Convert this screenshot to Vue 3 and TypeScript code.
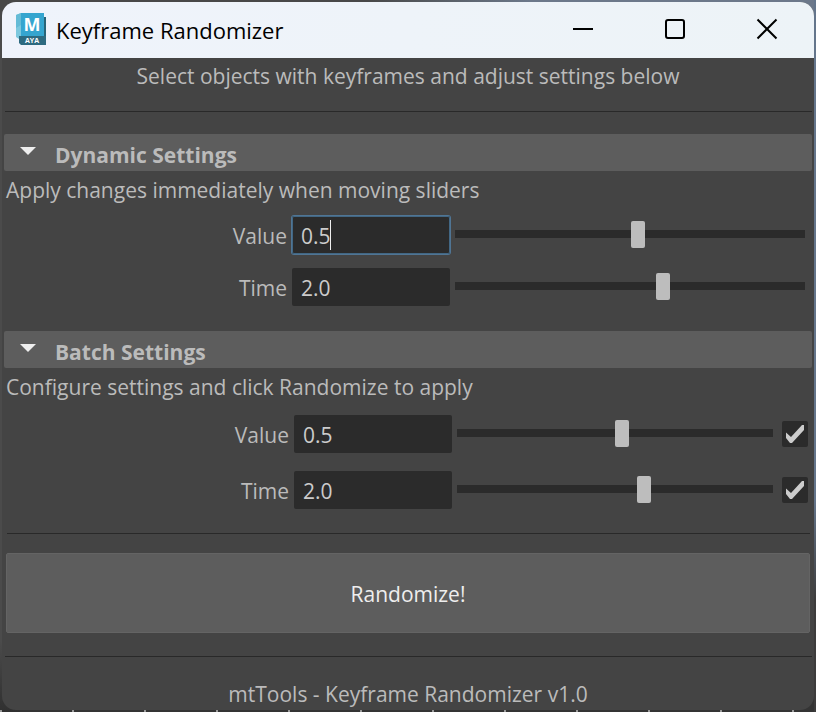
<script setup lang="ts">
import { reactive } from 'vue'

interface Setting {
  id: string
  label: string
  amount: string
  position: number
  focused?: boolean
  enabled?: boolean
}

interface Section {
  id: string
  title: string
  note: string
  open: boolean
  batch: boolean
  settings: Setting[]
}

const sections = reactive<Section[]>([
  {
    id: 'dynamic',
    title: 'Dynamic Settings',
    note: 'Apply changes immediately when moving sliders',
    open: true,
    batch: false,
    settings: [
      { id: 'dynamic-value', label: 'Value', amount: '0.5', position: 524, focused: true },
      { id: 'dynamic-time', label: 'Time', amount: '2.0', position: 598 },
    ],
  },
  {
    id: 'batch',
    title: 'Batch Settings',
    note: 'Configure settings and click Randomize to apply',
    open: true,
    batch: true,
    settings: [
      { id: 'batch-value', label: 'Value', amount: '0.5', position: 523, enabled: true },
      { id: 'batch-time', label: 'Time', amount: '2.0', position: 596, enabled: true },
    ],
  },
])
</script>

<template>
  <div class="desktop">
    <main class="window">
      <header class="titlebar">
        <svg class="logo" viewBox="0 0 30 32" aria-hidden="true">
          <path d="M0 2 5 0v23l-2 3-3-2z" fill="#7cc8de" />
          <path d="M0 2 5 0v12L0 15z" fill="#64bbd6" />
          <path d="M27 4h3v27l-3 1z" fill="#286478" />
          <path d="M5 0h23v23H5z" fill="#35a5cf" />
          <path d="M3 23h27v9H5l-2-2z" fill="#2d6a80" />
          <text class="logo-letter" x="16" y="18" text-anchor="middle">M</text>
          <text class="logo-name" x="16" y="30" text-anchor="middle">AYA</text>
        </svg>
        <h1 class="title">Keyframe Randomizer</h1>
        <div class="controls">
          <button type="button" class="control" aria-label="Minimize">
            <svg viewBox="0 0 22 22"><path d="M1 11h20" /></svg>
          </button>
          <button type="button" class="control" aria-label="Maximize">
            <svg viewBox="0 0 22 22"><rect x="2" y="2" width="18" height="18" rx="2" /></svg>
          </button>
          <button type="button" class="control" aria-label="Close">
            <svg viewBox="0 0 22 22"><path d="m1.500 1.500 19 19m0-19-19 19" /></svg>
          </button>
        </div>
      </header>

      <p class="caption intro">Select objects with keyframes and adjust settings below</p>
      <hr class="rule" />

      <section v-for="section in sections" :key="section.id" class="section" :class="{ batch: section.batch }">
        <h2 class="section-title">
          <button type="button" class="toggle" :aria-expanded="section.open" @click="section.open = !section.open">
            <svg class="arrow" :class="{ closed: !section.open }" viewBox="0 0 16 8" aria-hidden="true">
              <path d="M0 0h16L8 8z" />
            </svg>
            {{ section.title }}
          </button>
        </h2>
        <div v-if="section.open">
          <p class="note">{{ section.note }}</p>
          <div class="rows">
            <div v-for="item in section.settings" :key="item.id" class="row">
              <label class="label" :for="item.id">{{ item.label }}</label>
              <div class="field" :class="{ focused: item.focused }">
                <input :id="item.id" v-model="item.amount" class="amount" type="text" />
                <span v-if="item.focused" class="caret"></span>
              </div>
              <input
                v-model.number="item.position"
                class="slider"
                type="range"
                min="0"
                max="1000"
                :aria-label="item.label + ' slider'"
              />
              <label v-if="section.batch" class="tick">
                <input v-model="item.enabled" type="checkbox" :aria-label="item.label + ' enabled'" />
                <svg v-if="item.enabled" viewBox="0 0 26 26" aria-hidden="true">
                  <path d="M4 11.500 9 16 20 4h2v5L10 22H8l-4-5z" />
                </svg>
              </label>
            </div>
          </div>
        </div>
      </section>

      <hr class="rule inset" />
      <button type="button" class="randomize">Randomize!</button>
      <hr class="rule" />
      <footer class="caption">mtTools - Keyframe Randomizer v1.0</footer>
    </main>
  </div>
</template>

<style>
body {
  margin: 0;
  background: #444;
}
</style>

<style scoped>
* {
  box-sizing: border-box;
}

.desktop {
  min-height: 100vh;
  display: flex;
  padding: 2px;
  background:
    repeating-linear-gradient(90deg, #999 0 2px, transparent 2px 72px) bottom / 100% 2px no-repeat,
    linear-gradient(#64758b 0 500px, #3d3c3c 600px) right / 2px 100% no-repeat,
    linear-gradient(90deg, #484848 45%, #6c788a 65%) top / 100% 20px no-repeat,
    linear-gradient(#4b4b4b 90%, #303030) left / 20px 100% no-repeat,
    #343434;
  font-family: 'Open Sans', 'Noto Sans', sans-serif;
  font-size: 21px;
  line-height: 28px;
  color: #bbb;
}

.window {
  flex: 1;
  display: flex;
  flex-direction: column;
  min-width: 0;
  background: #444;
  border-radius: 14px;
  overflow: hidden;
}

.titlebar {
  display: flex;
  align-items: center;
  height: 56px;
  padding: 0 1px 0 14px;
  background: linear-gradient(90deg, #eff3fb, #edf3f7);
  color: #000;
}

.logo {
  width: 30px;
  height: 32px;
  margin-bottom: 2px;
}

.logo text {
  fill: #fff;
  font-weight: 700;
}

.logo-letter {
  font-size: 18px;
}

.logo-name {
  font-size: 7px;
}

.title {
  flex: 1;
  margin: 0 0 0 10px;
  font-size: 22px;
  font-weight: 400;
}

.controls {
  display: flex;
}

.control {
  width: 92px;
  height: 56px;
  padding: 0 0 2px;
  border: 0;
  background: none;
}

.control svg {
  display: block;
  width: 22px;
  height: 22px;
  margin: 0 auto;
  fill: none;
  stroke: #000;
  stroke-width: 2;
}

.caption {
  margin: 0;
  text-align: center;
}

.intro {
  padding: 4px 0 21px;
}

.rule {
  width: auto;
  height: 1px;
  margin: 0 2px 0 3px;
  border: 0;
  background: #292929;
}

.rule.inset {
  margin: 24px 4px 19px 5px;
}

.section {
  margin: 22px 2px 0;
}

.section.batch {
  margin-top: 25px;
}

.section-title {
  margin: 0;
  font-size: inherit;
}

.toggle {
  display: flex;
  align-items: center;
  width: 100%;
  height: 37px;
  padding: 4px 16px 0;
  border: 0;
  border-radius: 2px;
  background: #5d5d5d;
  color: #bbb;
  font: inherit;
  font-weight: 700;
}

.arrow {
  width: 16px;
  height: 8px;
  margin: 0 19px 8px 0;
  fill: #eee;
}

.arrow.closed {
  transform: rotate(-90deg);
}

.note {
  margin: 0;
  padding: 5px 2px 12px;
}

.batch .note {
  padding-bottom: 14px;
}

.rows {
  display: grid;
  gap: 14px;
  padding-right: 7px;
}

.batch .rows {
  gap: 18px;
  padding: 0 4px 0 2px;
}

.row {
  display: flex;
  align-items: center;
  height: 38px;
}

.label {
  width: 283px;
  padding-top: 2px;
  text-align: right;
}

.field {
  position: relative;
  width: 158px;
  height: 38px;
  margin: 0 5px;
}

.amount {
  display: block;
  width: 100%;
  height: 100%;
  padding: 2px 9px 0;
  border: 0;
  border-radius: 2px;
  outline: 0;
  background: #2b2b2b;
  color: #ccc;
  font: inherit;
}

.focused .amount {
  box-shadow: 0 0 0 1px #507594, inset 0 0 0 1px #426784;
}

.caret {
  position: absolute;
  top: 4px;
  left: 38px;
  width: 1px;
  height: 30px;
  background: #eee;
}

.slider {
  flex: 1;
  min-width: 0;
  height: 27px;
  margin: 0 0 2px;
  appearance: none;
  background: linear-gradient(#2b2b2b, #2b2b2b) center / 100% 8px no-repeat;
  border-radius: 2px;
}

.slider::-webkit-slider-thumb {
  width: 14px;
  height: 27px;
  appearance: none;
  border-radius: 2px;
  background: #bdbdbd;
}

.tick {
  position: relative;
  width: 26px;
  height: 26px;
  margin-left: 9px;
}

.tick input {
  display: block;
  width: 26px;
  height: 26px;
  margin: 0;
  appearance: none;
  border-radius: 2px;
  background: #2b2b2b;
}

.tick svg {
  position: absolute;
  inset: 0;
  fill: #ccc;
  pointer-events: none;
}

.randomize {
  height: 80px;
  margin: 0 4px 23px;
  padding: 2px 0 0;
  border: 1px solid #646464;
  border-radius: 2px;
  background: #5d5d5d;
  color: #eee;
  font: inherit;
}

footer.caption {
  padding-top: 23px;
}
</style>
